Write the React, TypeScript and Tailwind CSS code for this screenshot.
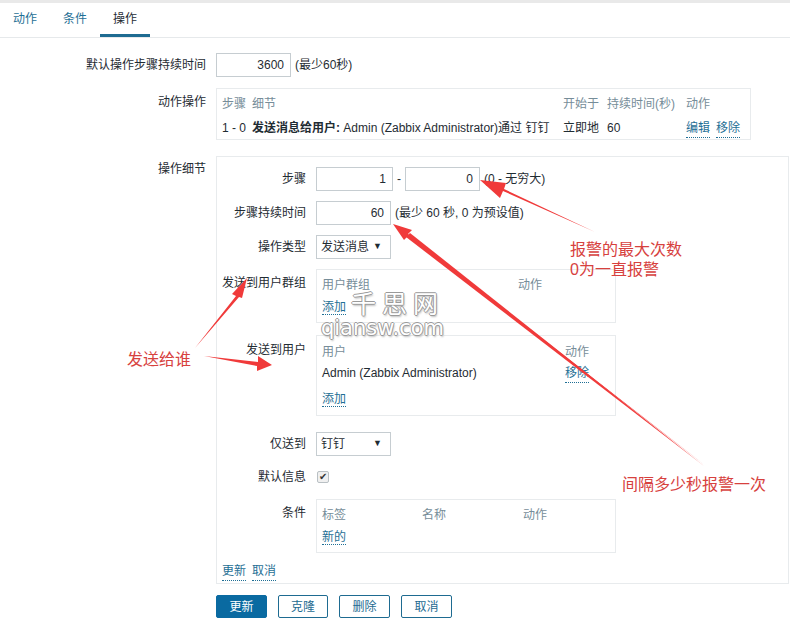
import React from 'react';

const font = { fontFamily: '"Liberation Sans", "Noto Sans CJK SC", sans-serif' };

function Link({ children }: { children: React.ReactNode }) {
  return (
    <span className="cursor-pointer border-b border-dotted border-[#1f6f95] text-[#1f6f95]">
      {children}
    </span>
  );
}

function TextBox({ value, w = 'w-[75px]' }: { value: string; w?: string }) {
  return (
    <div className={`${w} flex h-[24px] items-center justify-end border border-[#c6cdd1] bg-white px-[6px] text-[#1f2c33]`}>
      {value}
    </div>
  );
}

function Select({ value }: { value: string }) {
  return (
    <div className="flex h-[24px] w-[75px] items-center justify-between border border-[#c6cdd1] bg-white pl-[4px] pr-[8px] text-[#1f2c33]">
      <span>{value}</span>
      <span className="text-[9px]">▼</span>
    </div>
  );
}

export default function App() {
  return (
    <div className="relative h-[631px] w-[790px] overflow-hidden bg-white text-[12px] text-[#1f2c33]" style={font}>
      <div className="h-[3px] bg-[#e9e9e9]" />

      {/* tabs */}
      <div className="flex h-[35px] items-end border-b border-[#e6e9eb] pl-[13px]">
        <div className="pb-[9px] text-[#1f6f95]">动作</div>
        <div className="ml-[26px] pb-[9px] text-[#1f6f95]">条件</div>
        <div className="ml-[13px] border-b-[3px] border-[#1e6b91] px-[13px] pb-[6px]">操作</div>
      </div>

      <div className="flex flex-col pt-[15px]">
        {/* default step duration */}
        <div className="flex items-center">
          <div className="w-[206px] text-right">默认操作步骤持续时间</div>
          <div className="ml-[10px] flex items-center">
            <TextBox value="3600" />
            <span className="ml-[4px]">(最少60秒)</span>
          </div>
        </div>

        {/* action operations */}
        <div className="mt-[11px] flex items-start">
          <div className="w-[206px] pt-[5px] text-right">动作操作</div>
          <div className="ml-[10px] h-[52px] w-[535px] border border-[#e8ebed] px-[5px] pt-[6px]">
            <div className="flex text-[#768d99]">
              <span className="w-[30px]">步骤</span>
              <span className="w-[311px]">细节</span>
              <span className="w-[44px]">开始于</span>
              <span className="w-[79px]">持续时间(秒)</span>
              <span>动作</span>
            </div>
            <div className="mt-[6px] flex items-baseline">
              <span className="w-[30px]">1 - 0</span>
              <span className="w-[311px] whitespace-nowrap">
                <b>发送消息给用户:</b> Admin (Zabbix Administrator)通过 钉钉
              </span>
              <span className="w-[44px]">立即地</span>
              <span className="w-[79px]">60</span>
              <span className="flex gap-[6px]">
                <Link>编辑</Link>
                <Link>移除</Link>
              </span>
            </div>
          </div>
        </div>

        {/* operation details */}
        <div className="mt-[16px] flex items-start">
          <div className="w-[206px] pt-[4px] text-right">操作细节</div>
          <div className="ml-[10px] h-[428px] w-[573px] border border-[#e8ebed] pt-[10px]">
            <div className="flex flex-col">
              <div className="flex items-center">
                <div className="w-[89px] text-right">步骤</div>
                <div className="ml-[10px] flex items-center">
                  <TextBox value="1" w="w-[77px]" />
                  <span className="mx-[4px]">-</span>
                  <TextBox value="0" />
                  <span className="ml-[4px]">(0 - 无穷大)</span>
                </div>
              </div>

              <div className="mt-[10px] flex items-center">
                <div className="w-[89px] text-right">步骤持续时间</div>
                <div className="ml-[10px] flex items-center">
                  <TextBox value="60" />
                  <span className="ml-[4px]">(最少 60 秒, 0 为预设值)</span>
                </div>
              </div>

              <div className="mt-[10px] flex items-center">
                <div className="w-[89px] text-right">操作类型</div>
                <div className="ml-[10px]">
                  <Select value="发送消息" />
                </div>
              </div>

              <div className="mt-[10px] flex items-start">
                <div className="w-[89px] pt-[5px] text-right">发送到用户群组</div>
                <div className="ml-[10px] h-[54px] w-[300px] border border-[#e8ebed] px-[5px] pt-[6px]">
                  <div className="flex text-[#768d99]">
                    <span className="w-[196px]">用户群组</span>
                    <span>动作</span>
                  </div>
                  <div className="mt-[4px]">
                    <Link>添加</Link>
                  </div>
                </div>
              </div>

              <div className="mt-[12px] flex items-start">
                <div className="w-[89px] pt-[6px] text-right">发送到用户</div>
                <div className="ml-[10px] h-[81px] w-[300px] border border-[#e8ebed] px-[5px] pt-[7px]">
                  <div className="flex text-[#768d99]">
                    <span className="w-[243px]">用户</span>
                    <span>动作</span>
                  </div>
                  <div className="mt-[3px] flex items-baseline">
                    <span className="w-[243px]">Admin (Zabbix Administrator)</span>
                    <Link>移除</Link>
                  </div>
                  <div className="mt-[7px]">
                    <Link>添加</Link>
                  </div>
                </div>
              </div>

              <div className="mt-[16px] flex items-center">
                <div className="w-[89px] text-right">仅送到</div>
                <div className="ml-[10px]">
                  <Select value="钉钉" />
                </div>
              </div>

              <div className="mt-[12px] flex items-center">
                <div className="w-[89px] text-right">默认信息</div>
                <div className="ml-[11px] flex h-[12px] w-[12px] items-center justify-center rounded-[2px] border border-[#b9c0c4] bg-[#f0f0f0] text-[10px] leading-none text-[#333]">
                  ✔
                </div>
              </div>

              <div className="mt-[13px] flex items-start">
                <div className="w-[89px] pt-[5px] text-right">条件</div>
                <div className="ml-[10px] h-[54px] w-[300px] border border-[#e8ebed] px-[5px] pt-[6px]">
                  <div className="flex text-[#768d99]">
                    <span className="w-[100px]">标签</span>
                    <span className="w-[101px]">名称</span>
                    <span>动作</span>
                  </div>
                  <div className="mt-[4px]">
                    <Link>新的</Link>
                  </div>
                </div>
              </div>

              <div className="mt-[9px] flex gap-[6px] pl-[5px]">
                <Link>更新</Link>
                <Link>取消</Link>
              </div>
            </div>
          </div>
        </div>

        {/* buttons */}
        <div className="mt-[11px] flex gap-[11px] pl-[216px]">
          <button className="h-[23px] w-[51px] rounded-[2px] border border-[#0a6aa1] bg-[#0a6aa1] text-[12px] text-white">更新</button>
          <button className="h-[23px] w-[50px] rounded-[2px] border border-[#1e6b91] bg-white text-[12px] text-[#1e6b91]">克隆</button>
          <button className="h-[23px] w-[51px] rounded-[2px] border border-[#1e6b91] bg-white text-[12px] text-[#1e6b91]">删除</button>
          <button className="h-[23px] w-[51px] rounded-[2px] border border-[#1e6b91] bg-white text-[12px] text-[#1e6b91]">取消</button>
        </div>
      </div>

      {/* watermark */}
      <div
        className="pointer-events-none absolute left-[340px] top-[292px] flex w-[104px] flex-col items-end text-white"
        style={{ textShadow: '1px 0 #9a9a9a, -1px 0 #9a9a9a, 0 1px #9a9a9a, 0 -1px #9a9a9a, 1px 2px 2px #bbb' }}
      >
        <span className="text-[25px] leading-[24px] tracking-[6px]">千思网</span>
        <span className="text-[21px] leading-[24px]" style={{ fontFamily: '"DejaVu Sans", sans-serif' }}>qiansw.com</span>
      </div>

      {/* annotation arrows */}
      <svg className="pointer-events-none absolute left-0 top-0" width="790" height="631">
        <polygon points="595,232 503,191 500,198 480,180 506,183 504,189" fill="#f03a3a" />
        <polygon points="706,466 408,236 404,240 393,224 412,230 408,234" fill="#f03a3a" />
        <polygon points="704,466 410,233 406,237" fill="#f03a3a" />
        <polygon points="195,348 236,296 232,294 247,278 242,298 239,297" fill="#f03a3a" />
        <polygon points="204,356 258,362 258,356 272,365 257,371 257,366" fill="#f03a3a" />
      </svg>

      <div className="pointer-events-none absolute left-[570px] top-[240px] text-[16px] leading-[20px] text-[#d7413e]">
        报警的最大次数
        <br />
        0为一直报警
      </div>
      <div className="pointer-events-none absolute left-[127px] top-[350px] text-[16px] leading-[20px] text-[#d7413e]">发送给谁</div>
      <div className="pointer-events-none absolute left-[622px] top-[475px] text-[16px] leading-[20px] text-[#d7413e]">间隔多少秒报警一次</div>
    </div>
  );
}
